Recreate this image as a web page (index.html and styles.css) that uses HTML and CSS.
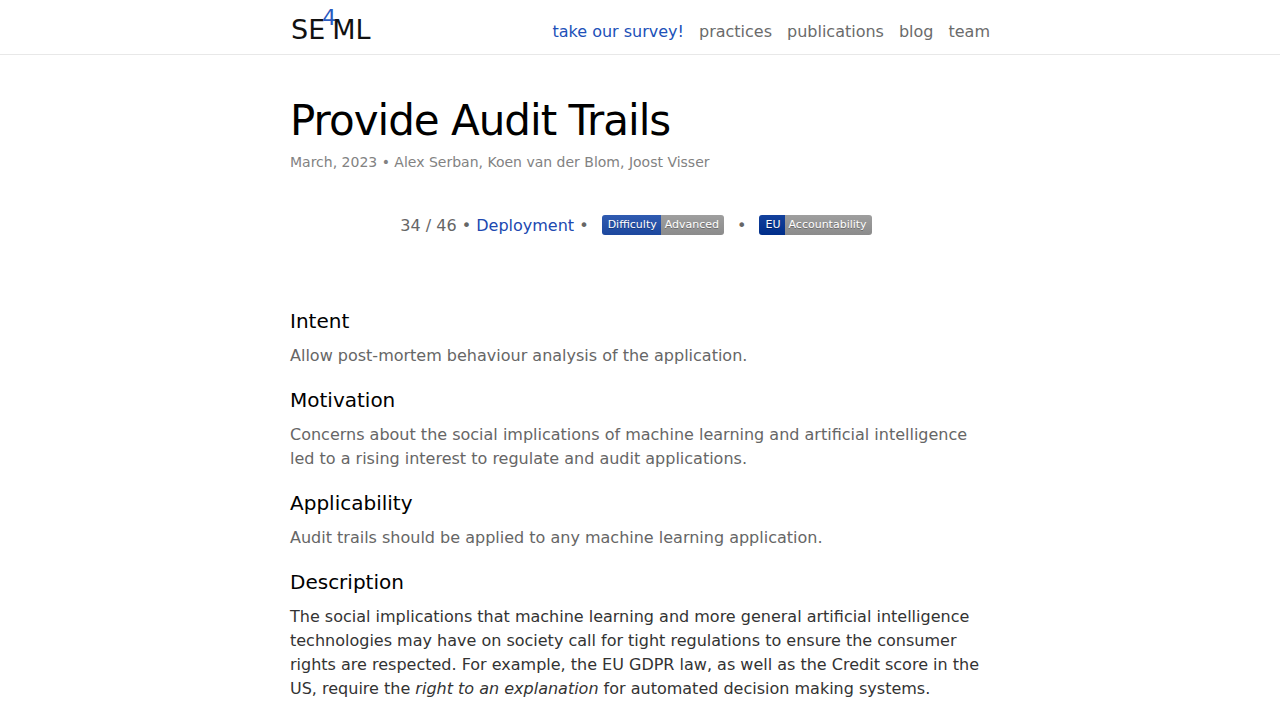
FILE: index.html
```html
<!DOCTYPE html>
<html lang="en">
<head>
    <meta charset="UTF-8">
    <meta name="viewport" content="width=device-width, initial-scale=1.0">
    <title>Provide Audit Trails</title>
    <link rel="stylesheet" href="styles.css">
</head>
<body>
    <header class="site-header">
        <div class="wrapper header-row">
            <a class="site-title" href="#">SE<span class="four">4</span>ML</a>
            <nav class="site-nav">
                <a class="survey" href="#">take our survey!</a>
                <a href="#">practices</a>
                <a href="#">publications</a>
                <a href="#">blog</a>
                <a href="#">team</a>
            </nav>
        </div>
    </header>

    <main class="wrapper">
        <article>
            <header class="post-header">
                <h1 class="post-title">Provide Audit Trails</h1>
                <p class="post-meta">March, 2023 • Alex Serban, Koen van der Blom, Joost Visser</p>
            </header>

            <div class="practice-info">
                <span>34 / 46 • <a href="#">Deployment</a> •</span>
                <span class="badge"><span class="badge-label">Difficulty</span><span class="badge-value">Advanced</span></span>
                <span>•</span>
                <span class="badge badge-eu"><span class="badge-label">EU</span><span class="badge-value">Accountability</span></span>
            </div>

            <div class="post-content">
                <h2>Intent</h2>
                <p class="summary">Allow post-mortem behaviour analysis of the application.</p>

                <h2>Motivation</h2>
                <p class="summary">Concerns about the social implications of machine learning and artificial intelligence led to a rising interest to regulate and audit applications.</p>

                <h2>Applicability</h2>
                <p class="summary">Audit trails should be applied to any machine learning application.</p>

                <h2>Description</h2>
                <p>The social implications that machine learning and more general artificial intelligence technologies may have on society call for tight regulations to ensure the consumer rights are respected. For example, the EU GDPR law, as well as the Credit score in the US, require the <em>right to an explanation</em> for automated decision making systems.</p>
            </div>
        </article>
    </main>
</body>
</html>
```

FILE: styles.css
```css
body {
    margin: 0;
    font-family: "DejaVu Sans", sans-serif;
    font-size: 16px;
    line-height: 24px;
    color: #333;
    background-color: #fff;
}
h1, h2, p {
    margin: 0;
    font-weight: 400;
}
a {
    color: #2048b0;
    text-decoration: none;
}
a:hover {
    text-decoration: underline;
}
.wrapper {
    max-width: 700px;
    margin: 0 auto;
    padding: 0 30px;
}

/* Header */
.site-header {
    border-bottom: 1px solid #e8e8e8;
}
.header-row {
    display: flex;
    justify-content: space-between;
    align-items: center;
    height: 54px;
}
.site-title {
    font-size: 27px;
    line-height: 54px;
    padding: 6px 0 0 1px;
    color: #111;
}
.four {
    margin: 0 -4px 0 -3px;
    font-size: 22px;
    line-height: 0;
    vertical-align: 14px;
    color: #2a5abf;
}
.site-nav {
    display: flex;
    gap: 15px;
    padding-top: 10px;
}
.site-nav a {
    color: #6b6b6b;
}
.site-nav .survey {
    color: #2050b8;
}

/* Title */
.post-header {
    padding-top: 41px;
}
.post-title {
    font-size: 42px;
    line-height: 50px;
    letter-spacing: -1px;
    color: #000;
}
.post-meta {
    margin-top: 4px;
    font-size: 14px;
    color: #828282;
}

/* Practice number, category and badges */
.practice-info {
    display: flex;
    flex-wrap: wrap;
    justify-content: center;
    align-items: center;
    gap: 13px;
    padding: 40px 8px 0 0;
    color: #666;
}
.badge {
    display: flex;
    margin-bottom: 2px;
    border-radius: 3px;
    overflow: hidden;
    font-size: 11px;
    line-height: 20px;
    color: #fff;
    text-shadow: 0 1px 0 rgba(1, 1, 1, 0.3);
}
.badge-label,
.badge-value {
    background-image: linear-gradient(rgba(187, 187, 187, 0.1), rgba(0, 0, 0, 0.1));
}
.badge-label {
    padding: 0 4px 0 6px;
    background-color: #2050b0;
}
.badge-value {
    padding: 0 5px 0 4px;
    background-color: #9b9b9b;
}
.badge-eu .badge-label {
    background-color: #003399;
}

/* Text */
.post-content {
    padding: 71px 0 30px;
}
.post-content h2 {
    margin-bottom: 11px;
    font-size: 20px;
    color: #000;
}
.post-content p {
    margin-bottom: 20px;
}
.post-content .summary {
    color: #666;
}
```
